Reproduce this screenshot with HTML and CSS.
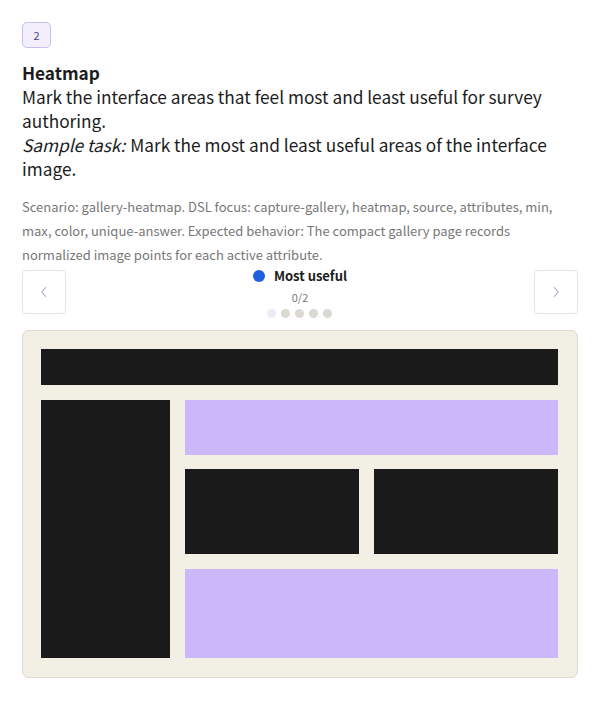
FILE: index.html
```html
<!DOCTYPE html>
<html>
<head>
<meta charset="utf-8">
<link rel="stylesheet" href="styles.css">
</head>
<body>
<div class="page">
  <div class="badge">2</div>
  <div class="question">
    <div class="title">Heatmap</div>
    <div class="desc">Mark the interface areas that feel most and least useful for survey authoring.</div>
    <div class="desc"><em>Sample task:</em> Mark the most and least useful areas of the interface image.</div>
  </div>
  <p class="meta">Scenario: gallery-heatmap. DSL focus: capture-gallery, heatmap, source, attributes, min, max, color, unique-answer. Expected behavior: The compact gallery page records normalized image points for each active attribute.</p>
  <div class="nav">
    <button class="arrow"><svg width="10" height="12" viewBox="0 0 10 12"><path d="M7 1 L3 6 L7 11" fill="none" stroke="#b4acd6" stroke-width="1.2"/></svg></button>
    <div class="center">
      <div class="attr"><span class="dot"></span>Most useful</div>
      <div class="count">0/2</div>
      <div class="pager"><span class="pd active"></span><span class="pd"></span><span class="pd"></span><span class="pd"></span><span class="pd"></span></div>
    </div>
    <button class="arrow"><svg width="10" height="12" viewBox="0 0 10 12"><path d="M3 1 L7 6 L3 11" fill="none" stroke="#b4acd6" stroke-width="1.2"/></svg></button>
  </div>
  <div class="canvas">
    <div class="blk dark top"></div>
    <div class="blk dark side"></div>
    <div class="blk purple p1"></div>
    <div class="blk dark m1"></div>
    <div class="blk dark m2"></div>
    <div class="blk purple p2"></div>
  </div>
</div>
</body>
</html>
```
FILE: styles.css
```css
* { box-sizing: border-box; }
body { margin: 0; background: #fff; font-family: "Noto Sans CJK KR", "Noto Sans", sans-serif; color: #1c1c1c; }
.page { padding: 22px 22px 0 22px; }
.badge { width: 29px; height: 26px; border: 1px solid #c9bdf0; background: #f2eefc; border-radius: 5px; color: #4a3f8a; font-size: 11px; display: flex; align-items: center; justify-content: center; }
.question { margin-top: 13px; font-size: 17.25px; line-height: 24px; }
.title { font-weight: 700; }
.desc em { font-style: italic; display: inline-block; line-height: 24px; height: 24px; vertical-align: top; padding-right: 1px; }
.meta { margin: 14px 0 0 0; font-size: 13px; line-height: 24px; color: #777; }
.nav { display: flex; justify-content: space-between; align-items: flex-start; margin-top: 3px; height: 60px; }
.arrow { width: 44px; height: 44px; border: 1px solid #e4e4e4; background: #fff; border-radius: 4px; display: flex; align-items: center; justify-content: center; padding: 0; }
.center { display: flex; flex-direction: column; align-items: center; }
.attr { display: flex; align-items: center; font-size: 13px; font-weight: 700; line-height: 14px; color: #1c1c1c; margin-top: -1px; }
.dot { width: 12px; height: 12px; border-radius: 50%; background: #1e5fe0; margin-right: 9px; }
.count { font-size: 11px; color: #777; margin-top: 7px; line-height: 14px; }
.pager { display: flex; gap: 5px; margin-top: 5px; }
.pd { width: 9px; height: 9px; border-radius: 50%; background: #dcd8d2; }
.pd.active { background: #eceaf6; }
.canvas { margin-top: 0; background: #f2efe5; border: 1px solid #dcd9d0; border-radius: 7px; height: 348px; padding: 18px; display: grid; grid-template-columns: 129px 174px 184px; grid-template-rows: 36px 55px 85px 89px; column-gap: 15px; row-gap: 14.5px; }
.blk.dark { background: #1a1a1a; }
.blk.purple { background: #cbb8fb; }
.top { grid-column: 1 / 4; }
.side { grid-column: 1; grid-row: 2 / 5; }
.p1 { grid-column: 2 / 4; grid-row: 2; }
.m1 { grid-column: 2; grid-row: 3; }
.m2 { grid-column: 3; grid-row: 3; }
.p2 { grid-column: 2 / 4; grid-row: 4; }
```
